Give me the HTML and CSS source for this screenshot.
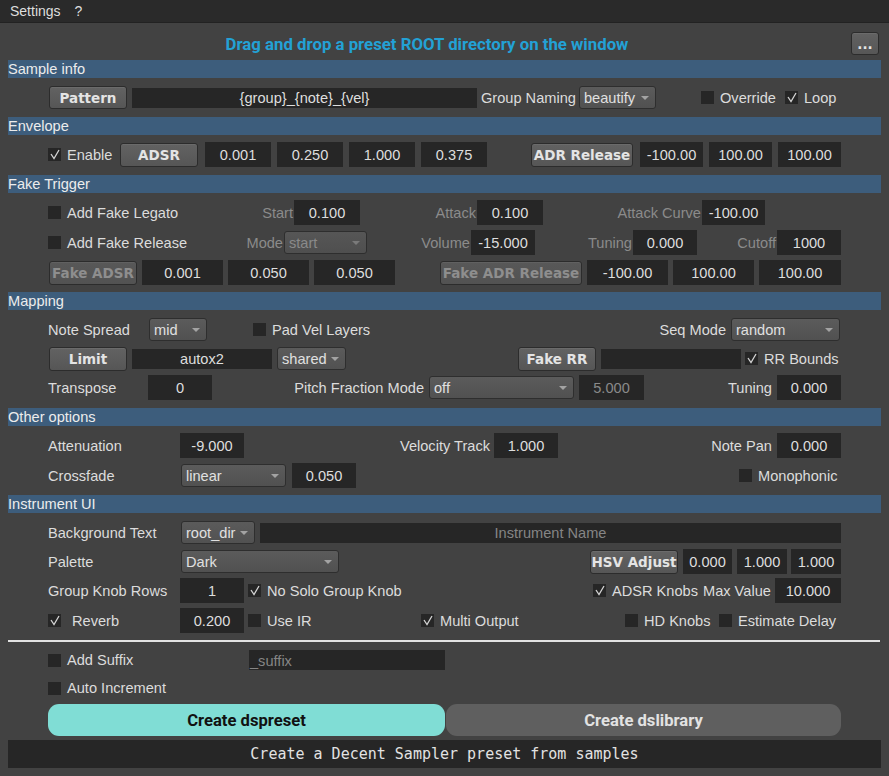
FILE: index.html
```html
<!DOCTYPE html>
<html>
<head>
<meta charset="utf-8">
<link rel="stylesheet" href="styles.css">
</head>
<body>
<div class="menubar"><span>Settings</span><span>?</span></div>

<div class="titlerow">
  <div class="title">Drag and drop a preset ROOT directory on the window</div>
  <div class="btn dots">...</div>
</div>

<div class="bar">Sample info</div>
<div class="sect">
  <div class="row">
    <div class="btn ml1 w78 h23">Pattern</div>
    <div class="field thin ml5 w345">{group}_{note}_{vel}</div>
    <div class="lbl ml4 w98">Group Naming</div>
    <div class="combo w77"><span class="ct">beautify</span><span class="arr"></span></div>
    <div class="chk ml45 w84"><span class="box"></span>Override</div>
    <div class="chk"><span class="box"><svg viewBox="0 0 13 13"><path d="M3 6 L6 10.5 L11 2"/></svg></span>Loop</div>
  </div>
</div>

<div class="bar">Envelope</div>
<div class="sect pb8">
  <div class="row">
    <div class="chk w72"><span class="box"><svg viewBox="0 0 13 13"><path d="M3 6 L6 10.5 L11 2"/></svg></span>Enable</div>
    <div class="btn w78">ADSR</div>
    <div class="field ml7 w66">0.001</div>
    <div class="field ml6 w66">0.250</div>
    <div class="field ml6 w66">1.000</div>
    <div class="field ml6 w66">0.375</div>
    <div class="btn ml44 w102">ADR Release</div>
    <div class="field ml7 w63">-100.00</div>
    <div class="field ml6 w63">100.00</div>
    <div class="field ml6 w63">100.00</div>
  </div>
</div>

<div class="bar">Fake Trigger</div>
<div class="sect">
  <div class="row">
    <div class="chk w200"><span class="box"></span>Add Fake Legato</div>
    <div class="lbl r dis w46">Start</div>
    <div class="field w66">0.100</div>
    <div class="lbl r dis w117">Attack</div>
    <div class="field w66">0.100</div>
    <div class="lbl r dis w159">Attack Curve</div>
    <div class="field w63">-100.00</div>
  </div>
  <div class="row">
    <div class="chk w190"><span class="box"></span>Add Fake Release</div>
    <div class="lbl r dis w46">Mode</div>
    <div class="combo dis w83"><span class="ct">start</span><span class="arr"></span></div>
    <div class="lbl r dis w104">Volume</div>
    <div class="field w64">-15.000</div>
    <div class="lbl r dis w98">Tuning</div>
    <div class="field w64">0.000</div>
    <div class="lbl r dis w80">Cutoff</div>
    <div class="field w64">1000</div>
  </div>
  <div class="row">
    <div class="btn dis ml1 w88">Fake ADSR</div>
    <div class="field ml5 w81">0.001</div>
    <div class="field ml5 w81">0.050</div>
    <div class="field ml5 w81">0.050</div>
    <div class="btn dis ml45 w142">Fake ADR Release</div>
    <div class="field ml5 w81">-100.00</div>
    <div class="field ml5 w81">100.00</div>
    <div class="field ml5 w82">100.00</div>
  </div>
</div>

<div class="bar">Mapping</div>
<div class="sect g4 pb8">
  <div class="row">
    <div class="lbl w101">Note Spread</div>
    <div class="combo w58"><span class="ct">mid</span><span class="arr"></span></div>
    <div class="chk ml46"><span class="box"></span>Pad Vel Layers</div>
    <div class="grow"></div>
    <div class="lbl pr5">Seq Mode</div>
    <div class="combo w109 mr1"><span class="ct">random</span><span class="arr"></span></div>
  </div>
  <div class="row">
    <div class="btn ml1 w78">Limit</div>
    <div class="field thin ml5 w140">autox2</div>
    <div class="combo ml5 w69"><span class="ct">shared</span><span class="arr"></span></div>
    <div class="btn ml172 w78">Fake RR</div>
    <div class="field thin ml5 w140"></div>
    <div class="chk ml4"><span class="box"><svg viewBox="0 0 13 13"><path d="M3 6 L6 10.5 L11 2"/></svg></span>RR Bounds</div>
  </div>
  <div class="row">
    <div class="lbl w100">Transpose</div>
    <div class="field w64">0</div>
    <div class="lbl r w217">Pitch Fraction Mode</div>
    <div class="combo w145"><span class="ct">off</span><span class="arr"></span></div>
    <div class="field dis ml5 w65">5.000</div>
    <div class="lbl r w133">Tuning</div>
    <div class="field w64">0.000</div>
  </div>
</div>

<div class="bar">Other options</div>
<div class="sect">
  <div class="row">
    <div class="lbl w132">Attenuation</div>
    <div class="field w64">-9.000</div>
    <div class="lbl r pr4 w250">Velocity Track</div>
    <div class="field w64">1.000</div>
    <div class="lbl r w219">Note Pan</div>
    <div class="field w64">0.000</div>
  </div>
  <div class="row">
    <div class="lbl w133">Crossfade</div>
    <div class="combo w105"><span class="ct">linear</span><span class="arr"></span></div>
    <div class="field ml6 w64">0.050</div>
    <div class="chk ml383"><span class="box"></span>Monophonic</div>
  </div>
</div>

<div class="bar">Instrument UI</div>
<div class="sect g4 pb0">
  <div class="row">
    <div class="lbl w133">Background Text</div>
    <div class="combo w74"><span class="ct">root_dir</span><span class="arr"></span></div>
    <div class="field thin ml5 grow ph">Instrument Name</div>
  </div>
  <div class="row">
    <div class="lbl w133">Palette</div>
    <div class="combo w158"><span class="ct">Dark</span><span class="arr"></span></div>
    <div class="btn ml251 w88">HSV Adjust</div>
    <div class="field ml5 w49">0.000</div>
    <div class="field ml5 w50">1.000</div>
    <div class="field ml4 w50">1.000</div>
  </div>
  <div class="row">
    <div class="lbl w132">Group Knob Rows</div>
    <div class="field w64">1</div>
    <div class="chk ml4 w345"><span class="box"><svg viewBox="0 0 13 13"><path d="M3 6 L6 10.5 L11 2"/></svg></span>No Solo Group Knob</div>
    <div class="chk w110"><span class="box"><svg viewBox="0 0 13 13"><path d="M3 6 L6 10.5 L11 2"/></svg></span>ADSR Knobs</div>
    <div class="lbl w72">Max Value</div>
    <div class="field w66">10.000</div>
  </div>
  <div class="row mt5">
    <div class="chk wide w132"><span class="box"><svg viewBox="0 0 13 13"><path d="M3 6 L6 10.5 L11 2"/></svg></span>Reverb</div>
    <div class="field w64">0.200</div>
    <div class="chk ml4 w173"><span class="box"></span>Use IR</div>
    <div class="chk w204"><span class="box"><svg viewBox="0 0 13 13"><path d="M3 6 L6 10.5 L11 2"/></svg></span>Multi Output</div>
    <div class="chk w94"><span class="box"></span>HD Knobs</div>
    <div class="chk"><span class="box"></span>Estimate Delay</div>
  </div>
</div>

<div class="sep"></div>

<div class="bottom">
  <div class="row r24">
    <div class="chk w201"><span class="box"></span>Add Suffix</div>
    <div class="field thin w196 phl">_suffix</div>
  </div>
  <div class="row r24">
    <div class="chk"><span class="box"></span>Auto Increment</div>
  </div>
  <div class="actions">
    <div class="create primary">Create dspreset</div>
    <div class="create secondary">Create dslibrary</div>
  </div>
</div>

<div class="status">Create a Decent Sampler preset from samples</div>
</body>
</html>
```

FILE: styles.css
```css
html, body {
  margin: 0;
  padding: 0;
}
body {
  background: #424242;
  color: #dcdcdc;
  font-family: "Liberation Sans", Arial, sans-serif;
  font-size: 14.6px;
  width: 889px;
  height: 776px;
  overflow: hidden;
}

.menubar {
  height: 22px;
  background: #2a2a2a;
  border-bottom: 1px solid #222;
  display: flex;
  align-items: center;
  gap: 14px;
  padding-left: 10px;
  color: #dedede;
  font-size: 14px;
}

.titlerow {
  display: flex;
  align-items: center;
  height: 23px;
  margin: 9px 10px 5px 8px;
}
.title {
  flex: 1;
  text-align: center;
  font-family: Roboto, "Liberation Sans", sans-serif;
  font-weight: bold;
  font-size: 16.8px;
  color: #23a1d5;
  padding-top: 1px;
}
.btn.dots {
  width: 28px;
  height: 23px;
  margin-left: 5px;
}

.bar {
  margin: 0 8px;
  height: 18px;
  line-height: 19px;
  background: #3d5d7c;
  color: #ececec;
}

.sect {
  padding: 7px 48px 7px;
  display: flex;
  flex-direction: column;
  gap: 5px;
}
.sect.g4 { gap: 4px; }
.sect.pb8 { padding-bottom: 8px; }
.sect.pb0 { padding-bottom: 0; }
.row.mt5 { margin-top: 1px; }

.row {
  display: flex;
  align-items: center;
  height: 25px;
  white-space: nowrap;
}
.row.r24 { height: 24px; }
.grow { flex: 1; }

.lbl { flex: none; padding-top: 1px; }
.lbl.r { text-align: right; padding-right: 5px; box-sizing: border-box; }
.lbl.r.dis { padding-right: 1px; }
.lbl.pr4 { padding-right: 4px; }
.lbl.pr5 { padding-right: 5px; }
.dis { color: #8b8b8b; }

.btn {
  flex: none;
  box-sizing: border-box;
  height: 24px;
  border: 1px solid #2c2c2c;
  border-radius: 3px;
  background: linear-gradient(#626262, #565656);
  box-shadow: inset 0 1px 0 rgba(255,255,255,0.06);
  font-family: "DejaVu Sans", sans-serif;
  font-weight: bold;
  font-size: 13.5px;
  color: #e4e4e4;
  display: flex;
  align-items: center;
  justify-content: center;
}
.btn.h23 { height: 23px; }
.btn.dis {
  color: #8e8e8e;
  background: linear-gradient(#585858, #525252);
}

.field {
  flex: none;
  box-sizing: border-box;
  height: 25px;
  background: #262626;
  color: #dedede;
  display: flex;
  align-items: center;
  justify-content: center;
  padding-top: 1px;
}
.field.thin { height: 20px; }
.field.grow { flex: 1; }
.field.dis { color: #8a8a8a; }
.field.ph { color: #858585; }
.field.phl { color: #858585; justify-content: flex-start; padding-left: 1px; }

.combo {
  flex: none;
  box-sizing: border-box;
  height: 23px;
  border: 1px solid #2e2e2e;
  border-radius: 3px;
  background: linear-gradient(#5b5b5b, #515151);
  color: #e0e0e0;
  display: flex;
  align-items: center;
  padding: 1px 6px 0 4px;
}
.combo .ct { flex: 1; }
.combo .arr {
  width: 0;
  height: 0;
  border-left: 4px solid transparent;
  border-right: 4px solid transparent;
  border-top: 4px solid #a3a3a3;
}
.combo.dis { color: #8a8a8a; background: linear-gradient(#565656, #4f4f4f); }
.combo.dis .arr { border-top-color: #7a7a7a; }

.chk {
  flex: none;
  display: flex;
  align-items: center;
}
.chk .box {
  width: 13px;
  height: 13px;
  background: #262626;
  margin-right: 6px;
  flex: none;
}
.chk.wide .box { margin-right: 11px; }
.chk svg {
  display: block;
  width: 13px;
  height: 13px;
}
.chk svg path {
  fill: none;
  stroke: #d4d4d4;
  stroke-width: 1.3;
}

.sep {
  margin: 7px 9px 0 8px;
  height: 2px;
  background: #e2e2e2;
}

.bottom {
  padding: 6px 48px 0 48px;
  display: flex;
  flex-direction: column;
  gap: 4px;
}
.actions {
  display: flex;
  height: 32px;
}
.create {
  box-sizing: border-box;
  height: 32px;
  border-radius: 11px;
  display: flex;
  align-items: center;
  justify-content: center;
  font-family: Roboto, "Liberation Sans", sans-serif;
  font-weight: bold;
  font-size: 16.6px;
}
.create.primary {
  width: 397px;
  background: #80ddd5;
  color: #111;
}
.create.secondary {
  width: 395px;
  margin-left: 1px;
  background: #5f5f5f;
  color: #e2e2e2;
}

.status {
  margin: 4px 8px 0;
  height: 28px;
  background: #262626;
  color: #e2e2e2;
  font-family: "DejaVu Sans Mono", monospace;
  font-size: 15px;
  display: flex;
  align-items: center;
  justify-content: center;
}

.ml1 { margin-left: 1px; }
.ml4 { margin-left: 4px; }
.ml5 { margin-left: 5px; }
.ml6 { margin-left: 6px; }
.ml7 { margin-left: 7px; }
.ml44 { margin-left: 44px; }
.ml45 { margin-left: 45px; }
.ml46 { margin-left: 46px; }
.ml172 { margin-left: 172px; }
.ml251 { margin-left: 251px; }
.ml383 { margin-left: 383px; }
.mr1 { margin-right: 1px; }

.w46 { width: 46px; }
.w49 { width: 49px; }
.w50 { width: 50px; }
.w58 { width: 58px; }
.w63 { width: 63px; }
.w64 { width: 64px; }
.w65 { width: 65px; }
.w66 { width: 66px; }
.w69 { width: 69px; }
.w72 { width: 72px; }
.w74 { width: 74px; }
.w77 { width: 77px; }
.w78 { width: 78px; }
.w80 { width: 80px; }
.w81 { width: 81px; }
.w82 { width: 82px; }
.w83 { width: 83px; }
.w84 { width: 84px; }
.w88 { width: 88px; }
.w94 { width: 94px; }
.w98 { width: 98px; }
.w100 { width: 100px; }
.w101 { width: 101px; }
.w102 { width: 102px; }
.w104 { width: 104px; }
.w105 { width: 105px; }
.w109 { width: 109px; }
.w110 { width: 110px; }
.w117 { width: 117px; }
.w132 { width: 132px; }
.w133 { width: 133px; }
.w140 { width: 140px; }
.w142 { width: 142px; }
.w145 { width: 145px; }
.w158 { width: 158px; }
.w159 { width: 159px; }
.w173 { width: 173px; }
.w190 { width: 190px; }
.w196 { width: 196px; }
.w200 { width: 200px; }
.w201 { width: 201px; }
.w204 { width: 204px; }
.w217 { width: 217px; }
.w219 { width: 219px; }
.w250 { width: 250px; }
.w345 { width: 345px; }
```
